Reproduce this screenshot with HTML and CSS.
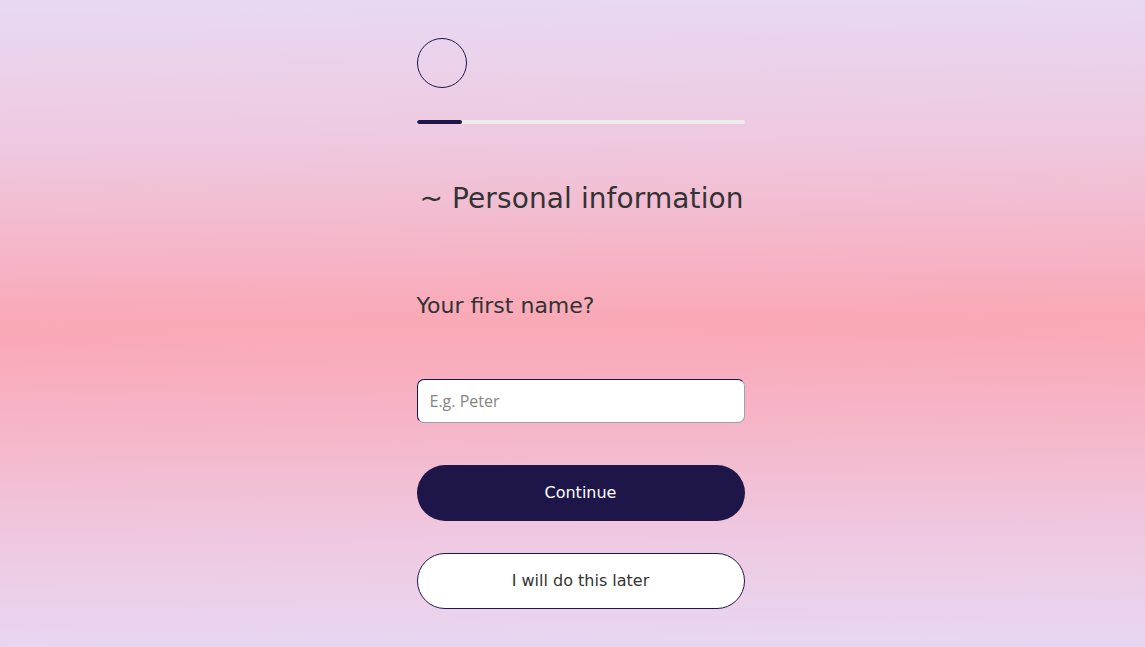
FILE: index.html
```html
<!DOCTYPE html>
<html lang="en">
<head>
<meta charset="utf-8">
<title>Personal information</title>
<link rel="stylesheet" href="styles.css">
</head>
<body>
<main class="page">
  <section class="flow">
    <div class="avatar"></div>
    <div class="progress"><div class="progress-fill" style="width:14%"></div></div>
    <h1 class="title">~ Personal information</h1>
    <label class="question" for="first-name">Your first name?</label>
    <input class="field" id="first-name" type="text" placeholder="E.g. Peter">
    <button class="btn btn-primary" type="button">Continue</button>
    <button class="btn btn-secondary" type="button">I will do this later</button>
  </section>
</main>
</body>
</html>
```
FILE: styles.css
```css
* { box-sizing: border-box; }
html, body { margin: 0; padding: 0; height: 100%; }
body {
  font-family: "DejaVu Sans", sans-serif;
  color: #333;
  background: linear-gradient(179.5deg, #e8d9f3 0%, #eec9e0 22%, #f5b6c9 38%, #faa8b5 50%, #f6b4c6 64%, #efc8e0 82%, #e8d7f2 100%);
  min-height: 647px;
}
.page {
  display: flex;
  justify-content: center;
  padding-top: 38px;
  padding-left: 16px;
}
.flow {
  width: 328px;
  display: flex;
  flex-direction: column;
}
.avatar {
  width: 50px;
  height: 50px;
  border: 1px solid #1e1649;
  border-radius: 50%;
}
.progress {
  margin-top: 32px;
  height: 4px;
  background: #ececec;
  border-radius: 2px;
  overflow: hidden;
}
.progress-fill {
  height: 100%;
  background: #1e1649;
  border-radius: 2px;
}
.title {
  margin: 55px 0 0;
  padding-left: 3px;
  font-size: 28px;
  font-weight: normal;
  line-height: 40px;
  color: #333;
  letter-spacing: 0.1px;
}
.question {
  margin-top: 71px;
  font-size: 22px;
  line-height: 32px;
  color: #333;
}
.field {
  margin-top: 57px;
  height: 44px;
  width: 100%;
  border: 1px solid;
  border-color: #1e1649 #a0a0a8 #a0a0a8 #1e1649;
  border-radius: 7px;
  background: #fff;
  padding: 0 12px;
  font-family: "Open Sans", sans-serif;
  font-size: 16px;
  color: #333;
  outline: none;
}
.field::placeholder { color: #858585; }
.btn {
  width: 100%;
  height: 56px;
  border-radius: 28px;
  font-family: "DejaVu Sans", sans-serif;
  font-size: 16px;
  line-height: 20px;
  padding: 0 0 1px;
  cursor: pointer;
}
.btn-primary {
  margin-top: 42px;
  background: #1e1649;
  color: #fff;
  border: none;
}
.btn-secondary {
  margin-top: 32px;
  background: #fff;
  color: #333;
  border: 1px solid #1e1649;
}
```
